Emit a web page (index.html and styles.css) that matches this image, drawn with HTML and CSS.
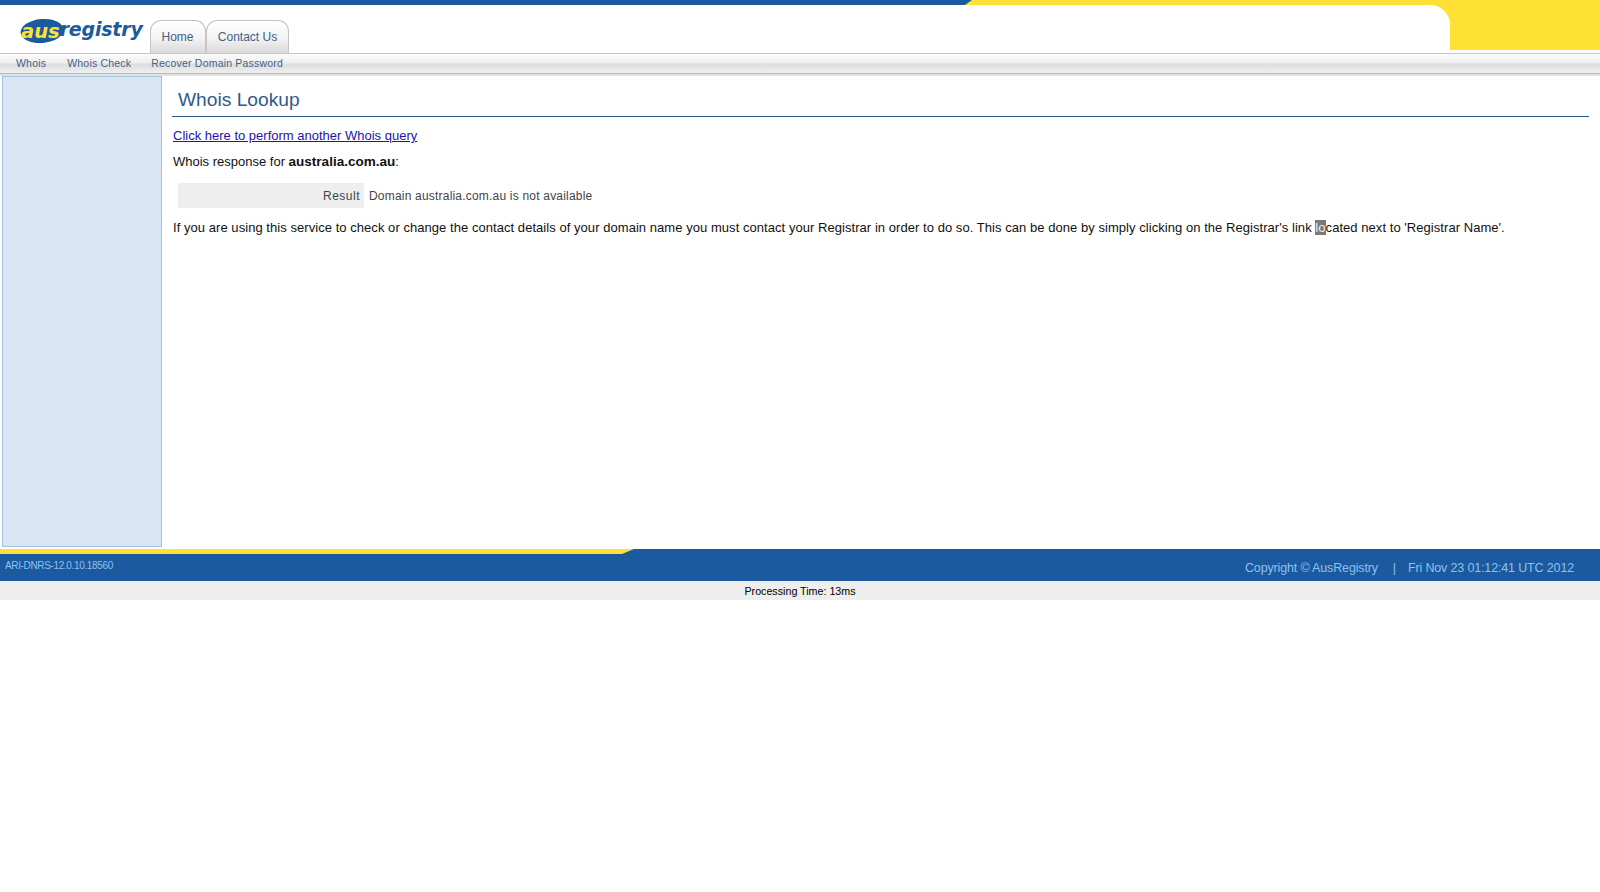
FILE: index.html
```html
<!DOCTYPE html>
<html lang="en">
<head>
<meta charset="utf-8">
<title>Whois Lookup</title>
<link rel="stylesheet" href="styles.css">
</head>
<body>
<header class="top">
  <div class="strip"><div class="strip-blue"></div></div>
  <div class="head">
    <div class="brand">
      <div class="logo">
        <svg class="logo-oval" width="44" height="26" viewBox="0 0 44 26"><ellipse cx="22" cy="13" rx="21.500" ry="12" transform="rotate(-5 22 13)" fill="#1c5a9e"/></svg>
        <span class="logo-aus">aus</span><span class="logo-reg">registry</span>
      </div>
      <nav class="tabs">
        <a class="tab tab-home">Home</a>
        <a class="tab tab-contact">Contact Us</a>
      </nav>
    </div>
    <div class="corner"><div class="notch"></div><div class="block"></div></div>
  </div>
</header>
<nav class="subnav">
  <a class="sub sub-whois">Whois</a>
  <a class="sub sub-check">Whois Check</a>
  <a class="sub">Recover Domain Password</a>
</nav>
<div class="shade"></div>
<div class="layout">
  <aside class="side"></aside>
  <main class="content">
    <h1 class="title">Whois Lookup</h1>
    <p class="line link-line"><a class="link" href="#">Click here to perform another Whois query</a></p>
    <p class="line resp">Whois response for <b class="domain">australia.com.au</b>:</p>
    <div class="result">
      <div class="result-key">Result</div>
      <div class="result-val">Domain australia.com.au is not available</div>
    </div>
    <p class="line note">If you are using this service to check or change the contact details of your domain name you must contact your Registrar in order to do so. This can be done by simply clicking on the Registrar's link <span class="sel">lo</span>cated next to 'Registrar Name'.</p>
  </main>
</div>
<footer class="foot">
  <div class="foot-strip"><div class="foot-yellow"></div></div>
  <div class="foot-main">
    <span class="build">ARI-DNRS-12.0.10.18560</span>
    <span class="copy">Copyright © AusRegistry<span class="bar">|</span>Fri Nov 23 01:12:41 UTC 2012</span>
  </div>
</footer>
<div class="proc">Processing Time: 13ms</div>
</body>
</html>
```
FILE: styles.css
```css
* { box-sizing: border-box; }
html, body { margin: 0; padding: 0; background: #fff; }
body { font-family: "Liberation Sans", Arial, sans-serif; font-size: 12px; color: #111; }
p, h1 { margin: 0; }

.strip { height: 5px; background: #ffe135; }
.strip-blue { width: 972px; height: 5px; background: #1b5a9e; clip-path: polygon(0 0, 100% 0, 965px 100%, 0 100%); }

.head { display: flex; height: 48px; background: #fff; }
.brand { flex: 1; display: flex; align-items: flex-end; }
.logo { display: flex; align-items: center; align-self: flex-start; width: 150px; height: 26px; margin-top: 13px; padding-left: 21px; position: relative; font-family: "DejaVu Sans", sans-serif; font-style: italic; font-weight: bold; font-size: 19.500px; white-space: nowrap; }
.logo-oval { position: absolute; left: 20px; top: 0; }
.logo-aus { position: relative; color: #ffe135; }
.logo-reg { position: relative; top: -2px; color: #1c5a9e; font-size: 19px; letter-spacing: -0.2px; }
.tabs { display: flex; }
.tab { display: flex; align-items: center; justify-content: center; height: 33px; border: 1px solid #c4c4c4; border-bottom: 0; border-radius: 11px 11px 0 0; background: linear-gradient(#fff, #f3f3f3 55%, #d9d9d9); color: #456088; font-size: 12px; }
.tab-home { width: 56px; padding-right: 1px; }
.tab-contact { width: 83px; }

.corner { display: flex; align-items: flex-start; }
.notch { width: 20px; height: 20px; background: radial-gradient(circle at 0 100%, #fff 19.500px, #ffe135 20.500px); }
.block { width: 150px; height: 45px; background: #ffe135; }

.subnav { display: flex; align-items: center; height: 21px; padding: 0 0 2px 16px; border-top: 1px solid #c6c6c6; border-bottom: 1px solid #b9b9b9; background: linear-gradient(#fbfbfb, #eeeeee 48%, #dcdcdc 52%, #efefef); }
.sub { color: #456088; font-size: 10.500px; letter-spacing: 0.2px; }
.sub-whois { margin-right: 21px; }
.sub-check { margin-right: 20px; }
.shade { height: 2px; background: #e2e2e2; }

.layout { display: flex; height: 473px; padding: 0 11px 0 2px; }
.side { width: 160px; height: 471px; background: #d8e6f4; border: 1px solid #a6c4de; }
.content { flex: 1; margin-left: 10px; }
.title { height: 41px; padding: 13px 0 0 6px; border-bottom: 1px solid #2a5a8c; color: #2f5a8e; font-size: 19.200px; font-weight: normal; line-height: 22px; }
.line { font-size: 13px; line-height: 16px; color: #111; }
.link-line { margin-top: 11px; padding-left: 1px; }
.link { color: #2412b0; }
.resp { margin-top: 10px; padding-left: 1px; }
.domain { font-size: 13.500px; }
.result { display: flex; height: 25px; margin: 13px 0 0 6px; color: #444; letter-spacing: 0.2px; line-height: 27px; }
.result-key { width: 186px; padding-right: 4px; background: #eeeeee; text-align: right; letter-spacing: 0.5px; }
.result-val { padding-left: 5px; }
.note { margin-top: 12px; padding-left: 1px; white-space: nowrap; letter-spacing: 0.05px; }
.sel { background: #7a7a7a; color: #eee; }

.foot-strip { height: 5px; background: #1b5a9e; }
.foot-yellow { width: 634px; height: 5px; background: #ffe135; clip-path: polygon(0 0, 100% 0, 622px 100%, 0 100%); }
.foot-main { display: flex; justify-content: space-between; height: 27px; background: #1b5a9e; color: #8fc0f0; }
.build { padding: 6px 0 0 5px; font-size: 10px; letter-spacing: -0.35px; }
.copy { padding: 7px 26px 0 0; font-size: 12.500px; letter-spacing: -0.15px; }
.bar { margin: 0 12px 0 15px; }
.proc { height: 19px; background: #eeeeee; color: #000; font-size: 10.700px; line-height: 21px; text-align: center; }
```
